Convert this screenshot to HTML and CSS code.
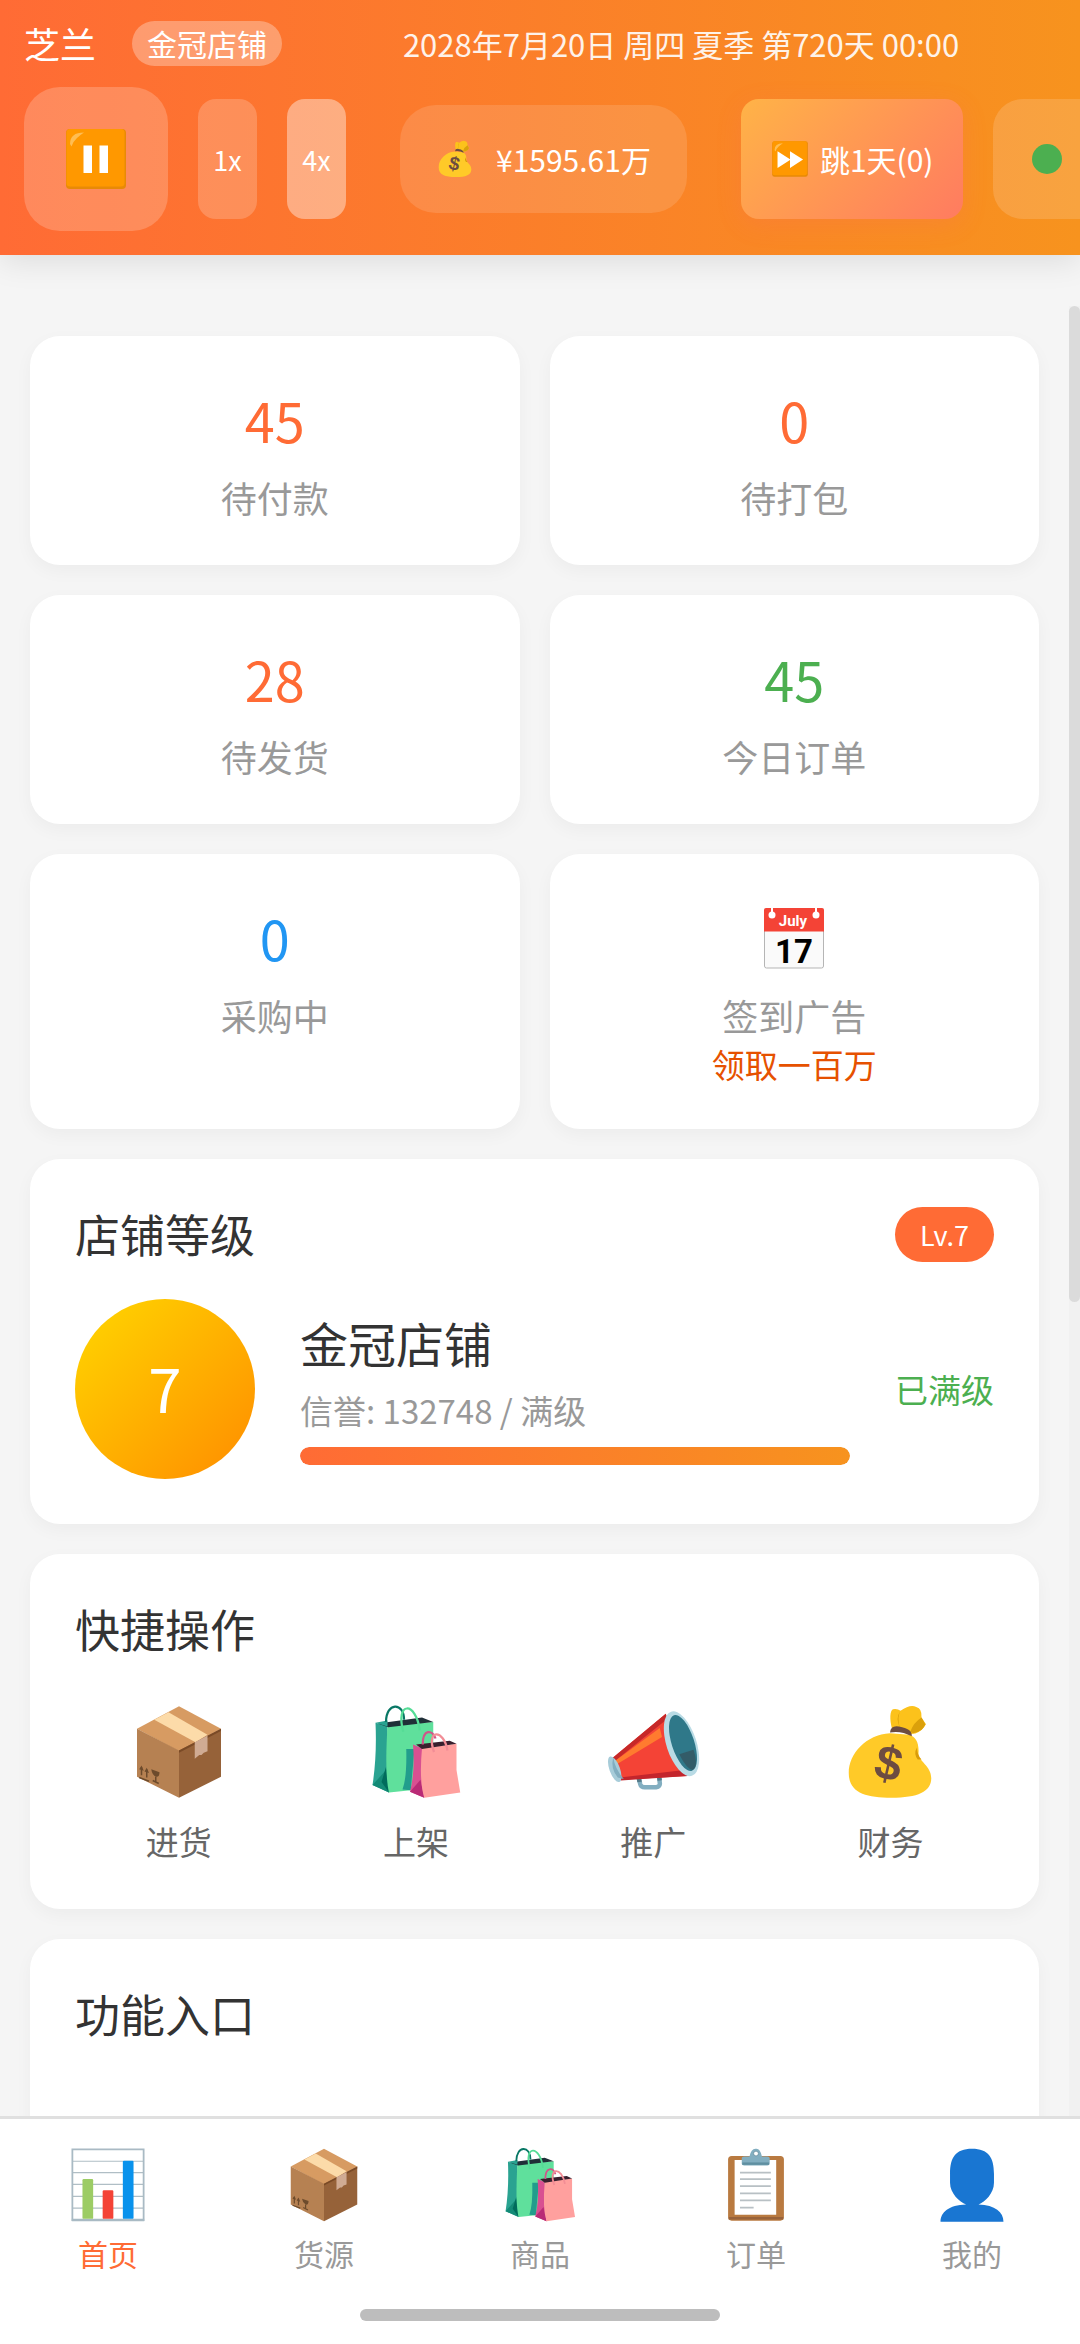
FILE: index.html
```html
<!DOCTYPE html>
<html lang="zh-CN">
<head>
    <meta charset="UTF-8">
    <meta name="viewport" content="width=device-width, initial-scale=1.0">
    <title>金冠店铺</title>
    <link rel="stylesheet" href="styles.css">
</head>
<body>
    <!-- 图标库 -->
    <svg class="icon-defs" aria-hidden="true">
        <symbol id="icon-box" viewBox="0 0 128 128">
            <path d="M64 3 120 33 64 63 8 33Z" fill="#d79b62"/>
            <path d="M8 33 64 62V125L8 97Z" fill="#b68152"/>
            <path d="M120 33 64 62V125L120 97Z" fill="#966239"/>
            <path d="M64 62 120 33V36L64 65Z" fill="#7a4a26"/>
            <path d="M31 21 50 11 102 41 86 51Z" fill="#fcdba9"/>
            <path d="M85 51 102 42V63L97 65 94 68 91 68 85 73Z" fill="#d0ab93"/>
            <path d="M11 98 24 103M14 95V84M21 98V87M33 97V103M29 102 37 106" fill="none" stroke="#6d4b2c" stroke-width="2"/>
            <path d="M11 87 14 82 17 89ZM18 90 21 85 24 92ZM27 87 38 91Q38 98 33 97Q28 94 27 87Z" fill="#6d4b2c"/>
        </symbol>
        <symbol id="icon-bags" viewBox="0 0 128 128">
            <path d="M10 25 26 29 28 118 6 108Q12 70 10 25Z" fill="#2aa391"/>
            <path d="M26 86 6 108 28 118Z" fill="#138a76"/>
            <path d="M24 84 18 104 28 118Z" fill="#006b5c"/>
            <path d="M26 29 87 24V72L57 115 28 118Q22 94 26 29Z" fill="#5fe09c"/>
            <path d="M13 26 72 18 87 24 27 31Z" fill="#202f38"/>
            <path d="M10 25 26 22V30Z" fill="#2aa391"/>
            <path d="M51 60H62L57 115 46 114Q52 98 51 60Z" fill="#229d8c"/>
            <path d="M24 24C24-3 48-3 48 21" fill="none" stroke="#087765" stroke-width="3"/>
            <path d="M47 37C36-4 64-4 69 35" fill="none" stroke="#55dc96" stroke-width="3"/>
            <path d="M60 54 72 59 75 125 56 117Q63 90 60 54Z" fill="#d85091"/>
            <path d="M70 101 56 117 75 125Z" fill="#b92b76"/>
            <path d="M72 59 118 53V88L123 118 75 125Q68 102 72 59Z" fill="#ffa09e"/>
            <path d="M64 54 109 49 118 53 72 60Z" fill="#39202e"/>
            <path d="M73 54C73 33 86 34 90 46" fill="none" stroke="#cf568a" stroke-width="3"/>
            <path d="M88 64C77 33 101 33 106 62" fill="none" stroke="#f28d96" stroke-width="3"/>
        </symbol>
        <symbol id="icon-horn" viewBox="0 0 128 128">
            <path d="M45 98 47 107Q48 111 53 111H68Q74 110 73 105L72 96" fill="none" stroke="#82aec0" stroke-width="6"/>
            <path d="M45 98 46 104M72 96 73 102" stroke="#557b8a" stroke-width="6"/>
            <path d="M10 72 81 13 110 96 21 101Z" fill="#f44336"/>
            <path d="M10 72 81 13 83 20 12 77Z" fill="#c62828"/>
            <path d="M20 98 106 88 110 96 21 102Z" fill="#c3252c"/>
            <path d="M12 77 73 32 76 44 13 82Z" fill="#ff7b2f"/>
            <ellipse cx="13" cy="87" rx="7" ry="18" transform="rotate(-20 13 87)" fill="#a7ccd9"/>
            <path d="M11 71Q13 86 25 100L17 98Q7 86 11 71Z" fill="#82aec0"/>
            <ellipse cx="102" cy="53" rx="20" ry="45" transform="rotate(-18 102 53)" fill="#b9dbe5"/>
            <ellipse cx="104" cy="52" rx="15" ry="39" transform="rotate(-18 104 52)" fill="#2f7889"/>
            <path d="M99 67 118 61Q125 83 117 88Q109 87 99 67Z" fill="#35505a" opacity=".7"/>
        </symbol>
        <symbol id="icon-money" viewBox="0 0 128 128">
            <path d="M67 34C63 20 64 9 68 7Q74 6 78 9Q91 0 99 4Q107 6 106 18L112 27Q104 40 92 40Z" fill="#fcc21b"/>
            <path d="M78 9Q71 19 77 31Q73 18 78 9ZM106 18Q95 25 91 37L95 39Q109 36 111 27Z" fill="#dba00b"/>
            <path d="M64 39C32 41 9 66 9 92C9 118 31 125 66 125C101 125 119 117 119 99C119 82 102 77 102 66C103 51 98 44 90 41Z" fill="#ffca28"/>
            <path d="M100 58Q95 66 101 74L106 74Q100 68 100 58Z" fill="#d99c0a"/>
            <path d="M64 38Q65 28 76 30Q94 33 93 43Q78 35 64 38Z" fill="#6d4c41"/>
            <text x="62" y="101" class="dollar" transform="rotate(13 62 80)">$</text>
        </symbol>
        <symbol id="icon-chart" viewBox="0 0 128 128">
            <path d="M4 4H124V124H4Z" fill="#fff"/>
            <path d="M4 24H124M4 43H124M4 63H124M4 83H124M4 103H124" stroke="#b0bec5" stroke-width="2"/>
            <path d="M4 4H124V123H4Z" fill="none" stroke="#a9bac4" stroke-width="3"/>
            <path d="M3 123H125" stroke="#a9bac4" stroke-width="4"/>
            <rect x="21" y="54" width="18" height="67" rx="2" fill="#9ccc65"/>
            <rect x="55" y="73" width="18" height="48" rx="2" fill="#f44336"/>
            <rect x="89" y="23" width="18" height="98" rx="2" fill="#0992ec"/>
        </symbol>
        <symbol id="icon-clipboard" viewBox="0 0 128 128">
            <rect x="17" y="15" width="94" height="109" rx="6" fill="#b97a40"/>
            <path d="M18 120H110" stroke="#99633b" stroke-width="4"/>
            <path d="M28 22H98V114H28Z" fill="#fff"/>
            <path d="M37 43H89M37 54H89M37 66H89M37 78H89M37 90H89M37 102H60" stroke="#b8c0c4" stroke-width="3"/>
            <path d="M40 19Q40 16 44 16H53Q56 2 64 3Q71 2 74 16H83Q87 16 87 19V28Q87 31 83 31H44Q40 31 40 28Z" fill="#82aec0"/>
            <path d="M41 28H86" stroke="#5f8fa1" stroke-width="4"/>
            <circle cx="64" cy="11" r="4" fill="#fff" stroke="#587f8f"/>
        </symbol>
        <symbol id="icon-user" viewBox="0 0 128 128">
            <path d="M64 3C92 3 101 18 101 45V60C101 78 86 92 75 97C103 98 117 110 117 126H11C11 110 25 98 54 97C43 92 27 78 27 60V45C27 18 36 3 64 3Z" fill="#1976d2"/>
        </symbol>
        <symbol id="icon-calendar" viewBox="0 0 128 128">
            <path d="M5 8H123V120Q123 124 119 124H9Q5 124 5 120Z" fill="#fafafa" stroke="#b5b5b5" stroke-width="2"/>
            <path d="M4 51V8Q4 4 8 4H120Q124 4 124 8V51Z" fill="#f44336"/>
            <circle cx="20" cy="18" r="7" fill="#fff"/>
            <circle cx="108" cy="18" r="7" fill="#fff"/>
            <path d="M20 3V18M108 3V18" stroke="#fff" stroke-width="4"/>
            <text x="62" y="39" class="cal-month">July</text>
            <text x="64" y="113" class="cal-day">17</text>
        </symbol>
        <symbol id="icon-pause" viewBox="0 0 128 128">
            <rect x="4" y="4" width="120" height="120" rx="8" fill="#e88a06"/>
            <rect x="5" y="4" width="116" height="115" rx="7" fill="#ff9800"/>
            <path d="M12 34Q12 11 40 11Q31 17 26 22Q18 29 15 39Z" fill="#ffbd52"/>
            <path d="M39 37H56V92H39ZM71 37H88V92H71Z" fill="#fff"/>
        </symbol>
        <symbol id="icon-forward" viewBox="0 0 128 128">
            <rect x="4" y="4" width="120" height="120" rx="8" fill="#e88a06"/>
            <rect x="5" y="4" width="116" height="115" rx="7" fill="#ff9800"/>
            <path d="M12 34Q12 11 40 11Q31 17 26 22Q18 29 15 39Z" fill="#ffbd52"/>
            <path d="M22 38 64 65V38L108 66 64 94V67L22 94Z" fill="#fff"/>
        </symbol>
    </svg>

    <div class="app">
        <header class="header">
            <div class="header-top">
                <span class="player-name">芝兰</span>
                <span class="shop-badge">金冠店铺</span>
                <time class="game-date">2028年7月20日 周四 夏季 第720天 00:00</time>
            </div>
            <div class="controls">
                <button class="pause-btn" aria-label="暂停"><svg class="icon-md"><use href="#icon-pause"/></svg></button>
                <button class="speed-btn">1x</button>
                <button class="speed-btn active">4x</button>
                <div class="money">
                    <svg class="icon-sm"><use href="#icon-money"/></svg>
                    <span>¥1595.61万</span>
                </div>
                <button class="skip-btn"><svg class="icon-sm"><use href="#icon-forward"/></svg>跳1天(0)</button>
                <div class="status"><span class="status-dot"></span></div>
            </div>
        </header>

        <main class="main">
            <div class="content">
                <section class="stats">
                    <div class="stat-card">
                        <div class="stat-value">45</div>
                        <div class="stat-label">待付款</div>
                    </div>
                    <div class="stat-card">
                        <div class="stat-value">0</div>
                        <div class="stat-label">待打包</div>
                    </div>
                    <div class="stat-card">
                        <div class="stat-value">28</div>
                        <div class="stat-label">待发货</div>
                    </div>
                    <div class="stat-card">
                        <div class="stat-value green">45</div>
                        <div class="stat-label">今日订单</div>
                    </div>
                    <div class="stat-card">
                        <div class="stat-value blue">0</div>
                        <div class="stat-label">采购中</div>
                    </div>
                    <button class="stat-card">
                        <span class="stat-value"><svg class="icon-md"><use href="#icon-calendar"/></svg></span>
                        <span class="stat-label">签到广告</span>
                        <span class="stat-tip">领取一百万</span>
                    </button>
                </section>

                <section class="card">
                    <div class="card-header">
                        <h2 class="card-title">店铺等级</h2>
                        <span class="level-tag">Lv.7</span>
                    </div>
                    <div class="level">
                        <div class="level-circle">7</div>
                        <div class="level-info">
                            <div class="level-name">金冠店铺</div>
                            <div class="level-exp">信誉: 132748 / 满级</div>
                            <div class="progress"><div class="progress-bar" style="width: 100%"></div></div>
                        </div>
                        <span class="level-max">已满级</span>
                    </div>
                </section>

                <section class="card">
                    <h2 class="card-title">快捷操作</h2>
                    <div class="actions">
                        <button class="action"><svg class="icon-lg"><use href="#icon-box"/></svg>进货</button>
                        <button class="action"><svg class="icon-lg"><use href="#icon-bags"/></svg>上架</button>
                        <button class="action"><svg class="icon-lg"><use href="#icon-horn"/></svg>推广</button>
                        <button class="action"><svg class="icon-lg"><use href="#icon-money"/></svg>财务</button>
                    </div>
                </section>

                <section class="card card-entries">
                    <h2 class="card-title">功能入口</h2>
                </section>
            </div>
            <div class="scroll-track"><div class="scroll-thumb"></div></div>
        </main>

        <footer class="footer">
            <nav class="tabs">
                <a href="#" class="tab active"><svg class="icon-tab"><use href="#icon-chart"/></svg>首页</a>
                <a href="#" class="tab"><svg class="icon-tab"><use href="#icon-box"/></svg>货源</a>
                <a href="#" class="tab"><svg class="icon-tab"><use href="#icon-bags"/></svg>商品</a>
                <a href="#" class="tab"><svg class="icon-tab"><use href="#icon-clipboard"/></svg>订单</a>
                <a href="#" class="tab"><svg class="icon-tab"><use href="#icon-user"/></svg>我的</a>
            </nav>
            <div class="home-bar"></div>
        </footer>
    </div>
</body>
</html>
```
FILE: styles.css
```css
* {
    margin: 0;
    padding: 0;
    box-sizing: border-box;
}
body {
    font-family: "Noto Sans CJK SC", sans-serif;
    background: #f5f5f5;
    color: #333;
}
button {
    font-family: inherit;
    border: none;
    background: none;
    cursor: pointer;
}
svg {
    display: block;
    flex: none;
}
.icon-defs {
    display: none;
}
.icon-sm { width: 38px; height: 38px; }
.icon-md { width: 64px; height: 64px; }
.icon-tab { width: 76px; height: 76px; }
.icon-lg { width: 96px; height: 96px; }

/* 图标里的文字 */
.dollar {
    font: bold 64px "Liberation Sans", sans-serif;
    fill: #6d4c41;
    text-anchor: middle;
}
.cal-month {
    font: bold 30px Roboto, sans-serif;
    fill: #fff;
    text-anchor: middle;
}
.cal-day {
    font: bold 66px Roboto, sans-serif;
    fill: #000;
    text-anchor: middle;
}

.app {
    display: flex;
    flex-direction: column;
    height: 100vh;
    overflow: hidden;
}

/* 顶部栏 */
.header {
    background: linear-gradient(90deg, #ff6b35, #f7931e);
    color: #fff;
    padding: 21px 0 24px 24px;
    box-shadow: 0 6px 30px rgba(0,0,0,0.1);
    overflow: hidden;
    z-index: 1;
    flex: none;
}
.header-top {
    display: flex;
    align-items: center;
    margin-bottom: 21px;
}
.player-name {
    font-size: 36px;
    line-height: 45px;
    margin-right: 36px;
}
.shop-badge {
    font-size: 30px;
    line-height: 45px;
    padding: 0 15px;
    border-radius: 24px;
    background: rgba(255,255,255,0.3);
}
.game-date {
    flex: 1;
    text-align: center;
    font-size: 31px;
    line-height: 45px;
    white-space: nowrap;
    opacity: 0.9;
}
.controls {
    display: flex;
    align-items: center;
    gap: 30px;
}
.controls > * {
    flex: none;
    display: flex;
    align-items: center;
    justify-content: center;
    color: #fff;
    white-space: nowrap;
}
.pause-btn {
    width: 144px;
    height: 144px;
    border-radius: 36px;
    background: rgba(255,255,255,0.2);
}
.speed-btn {
    width: 59px;
    height: 120px;
    font-size: 27px;
    border-radius: 18px;
    background: rgba(255,255,255,0.2);
}
.speed-btn.active {
    background: rgba(255,255,255,0.4);
}
.money {
    height: 108px;
    margin: 0 24px;
    padding: 0 36px;
    gap: 22px;
    font-size: 30px;
    border-radius: 36px;
    background: rgba(255,255,255,0.13);
}
.skip-btn {
    height: 120px;
    padding: 0 30px;
    gap: 11px;
    font-size: 30px;
    border-radius: 18px;
    background: linear-gradient(135deg, #ffb347, #ff7b60);
    box-shadow: 0 6px 24px rgba(255,107,107,0.2);
}
.status {
    width: 240px;
    height: 120px;
    border-radius: 30px;
    background: rgba(255,255,255,0.15);
}
.controls .status {
    justify-content: flex-start;
    padding-left: 39px;
}
.status-dot {
    width: 30px;
    height: 30px;
    border-radius: 50%;
    background: #4caf50;
}

/* 内容区 */
.main {
    flex: 1;
    min-height: 0;
    display: flex;
    overflow: hidden;
}
.content {
    flex: 1;
    padding: 81px 30px 30px;
}
.scroll-track {
    width: 11px;
    margin-top: 51px;
    background: #f1f1f1;
}
.scroll-thumb {
    height: 55%;
    border-radius: 6px;
    background: #dbdbdb;
}
.stats {
    display: grid;
    grid-template-columns: 1fr 1fr;
    gap: 30px;
    margin-bottom: 30px;
}
.stat-card,
.card {
    background: #fff;
    border-radius: 30px;
    padding: 45px;
    box-shadow: 0 6px 18px rgba(0,0,0,0.04);
}
.stat-card {
    display: flex;
    flex-direction: column;
    align-items: center;
}
.stat-value {
    display: flex;
    align-items: center;
    height: 78px;
    font-size: 54px;
    line-height: 78px;
    color: #ff6b35;
}
.stat-value.green {
    color: #4caf50;
}
.stat-value.blue {
    color: #2196f3;
}
.stat-label {
    margin-top: 16px;
    font-size: 36px;
    line-height: 45px;
    color: #999;
}
.stat-tip {
    margin-top: 6px;
    font-size: 33px;
    line-height: 40px;
    color: #e65100;
}
.card {
    margin-bottom: 30px;
}
.card-entries {
    min-height: 400px;
}
.card-header {
    display: flex;
    justify-content: space-between;
    align-items: center;
    margin-bottom: 35px;
}
.card-title {
    font-size: 45px;
    font-weight: normal;
    line-height: 60px;
}
.level-tag {
    padding: 0 25px;
    font-size: 27px;
    line-height: 55px;
    color: #fff;
    background: #ff6b35;
    border-radius: 30px;
}
.level {
    display: flex;
    align-items: center;
    gap: 45px;
}
.level-circle {
    flex: none;
    width: 180px;
    height: 180px;
    border-radius: 50%;
    background: linear-gradient(135deg, #ffd700, #ff8c00);
    color: #fff;
    font-size: 60px;
    line-height: 176px;
    text-align: center;
}
.level-info {
    flex: 1;
}
.level-name {
    font-size: 48px;
    line-height: 56px;
    margin-bottom: 19px;
}
.level-exp {
    font-size: 33px;
    line-height: 42px;
    margin-bottom: 16px;
    color: #999;
}
.progress {
    height: 18px;
    border-radius: 9px;
    background: #eee;
    overflow: hidden;
}
.progress-bar {
    height: 100%;
    border-radius: 9px;
    background: linear-gradient(90deg, #ff6b35, #f7931e);
}
.level-max {
    font-size: 33px;
    color: #4caf50;
}
.actions {
    display: grid;
    grid-template-columns: repeat(4, 1fr);
    gap: 30px;
    margin-top: 45px;
}
.action {
    display: flex;
    flex-direction: column;
    align-items: center;
    gap: 19px;
    font-size: 33px;
    line-height: 45px;
    color: #666;
}

/* 底部导航 */
.footer {
    flex: none;
    background: #fff;
    border-top: 3px solid #e0e0e0;
    padding: 28px 0 23px;
}
.tabs {
    display: flex;
    margin-bottom: 35px;
}
.tab {
    flex: 1;
    display: flex;
    flex-direction: column;
    align-items: center;
    gap: 9px;
    font-size: 30px;
    line-height: 42px;
    color: #999;
    text-decoration: none;
}
.tab.active {
    color: #ff6b35;
}
.home-bar {
    width: 33.333%;
    height: 12px;
    margin: 0 auto;
    border-radius: 6px;
    background: #bdbdbd;
}
```
